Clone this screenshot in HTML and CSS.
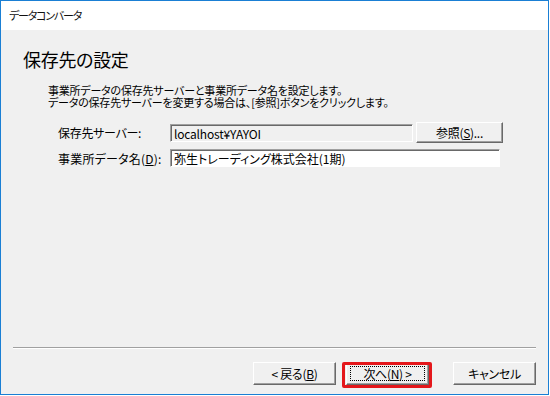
FILE: index.html
```html
<!DOCTYPE html>
<html lang="ja">
<head>
  <meta charset="UTF-8">
  <title>データコンバータ</title>
  <link rel="stylesheet" href="styles.css">
</head>
<body>
  <div class="window">
    <div class="titlebar">データコンバータ</div>
    <div class="content">
      <h1 class="heading">保存先の設定</h1>
      <div class="desc">
        <div>事業所データの保存先サーバーと事業所データ名を設定します。</div>
        <div>データの保存先サーバーを変更する場合は、[参照]ボタンをクリックします。</div>
      </div>

      <div class="row row-server">
        <label class="label">保存先サーバー:</label>
        <div class="field field-readonly">localhost¥YAYOI</div>
        <button class="btn btn-browse">参照(<u>S</u>)...</button>
      </div>
      <div class="row row-name">
        <label class="label label-wide">事業所データ名(<u>D</u>):</label>
        <div class="field field-name">弥生トレーディング株式会社(1期)</div>
      </div>

      <div class="separator"></div>

      <div class="buttons">
        <button class="btn">&lt; 戻る(<u>B</u>)</button>
        <div class="next-wrap">
          <button class="btn btn-focus"><span class="focus-ring">次へ(<u>N</u>) &gt;</span></button>
          <div class="highlight"></div>
        </div>
        <button class="btn btn-cancel">キャンセル</button>
      </div>
    </div>
  </div>
</body>
</html>
```

FILE: styles.css
```css
body {
  margin: 0;
  background: #fff;
  font-family: "Noto Sans CJK JP", sans-serif;
  font-size: 12px;
  color: #000;
  font-feature-settings: "palt";
}
.window {
  width: 549px;
  height: 395px;
  box-sizing: border-box;
  border: 1px solid #1a7fd4;
  display: flex;
  flex-direction: column;
}
.titlebar {
  height: 29px;
  line-height: 29px;
  padding-left: 8px;
  background: #fff;
  font-size: 11px;
  letter-spacing: -1.2px;
  color: #111;
}
.content {
  flex: 1;
  background: #f0f0f0;
  display: flex;
  flex-direction: column;
}
.heading {
  margin: 19px 0 0 22px;
  font-size: 18px;
  line-height: 20px;
  font-weight: normal;
  letter-spacing: -0.3px;
}
.desc {
  margin: 15px 0 0 47px;
  font-size: 11px;
  line-height: 12px;
  letter-spacing: -0.2px;
}
.row {
  display: flex;
  align-items: center;
  margin-left: 57px;
}
.row-server {
  margin-top: 14px;
  height: 21px;
}
.row-name {
  margin-top: 6px;
  height: 18px;
}
.label {
  width: 112px;
  letter-spacing: -0.3px;
}
.label-wide {
  letter-spacing: 0.2px;
}
.field {
  height: 18px;
  line-height: 18px;
  box-sizing: border-box;
  padding-left: 3px;
  border: 1px solid;
  border-color: #a0a0a0 #fff #fff #a0a0a0;
  box-shadow: inset 1px 1px 0 #696969;
  white-space: nowrap;
}
.field-readonly {
  width: 243px;
  background: #f0f0f0;
  letter-spacing: -0.2px;
}
.field-name {
  width: 330px;
  background: #fff;
}
.btn {
  font: inherit;
  color: #000;
  width: 83px;
  height: 23px;
  padding: 0;
  background: #f0f0f0;
  border: 1px solid;
  border-color: #fff #696969 #696969 #fff;
  box-shadow: inset -1px -1px 0 #a0a0a0;
  letter-spacing: -0.3px;
}
.btn-browse {
  width: 87px;
  height: 21px;
  margin-left: 3px;
}
.separator {
  margin: auto 12px 0 12px;
  height: 1px;
  background: #a0a0a0;
  border-bottom: 1px solid #fff;
}
.buttons {
  display: flex;
  justify-content: flex-end;
  gap: 10px;
  margin: 13px 12px 9px 0;
}
.btn-cancel {
  margin-left: 14px;
}
.next-wrap {
  position: relative;
}
.btn-focus {
  padding: 3px;
}
.focus-ring {
  display: flex;
  align-items: center;
  justify-content: center;
  height: 100%;
  border: 1px dotted #000;
  box-sizing: border-box;
}
.highlight {
  position: absolute;
  left: -4px;
  right: -3px;
  top: 0;
  bottom: -3px;
  border: 3px solid #e4171b;
  border-radius: 2px;
}
```
